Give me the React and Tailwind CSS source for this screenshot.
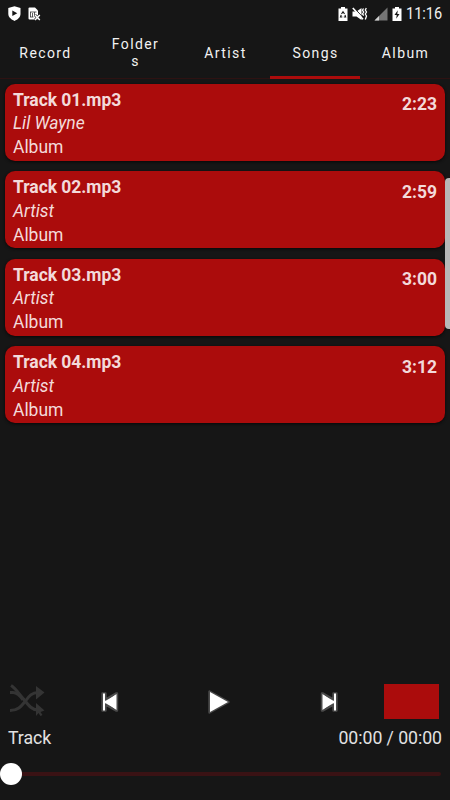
import React from "react";

const tabs = ["Record", "Folders", "Artist", "Songs", "Album"];

const songs = [
  { title: "Track 01.mp3", artist: "Lil Wayne", album: "Album", time: "2:23" },
  { title: "Track 02.mp3", artist: "Artist", album: "Album", time: "2:59" },
  { title: "Track 03.mp3", artist: "Artist", album: "Album", time: "3:00" },
  { title: "Track 04.mp3", artist: "Artist", album: "Album", time: "3:12" },
];

const StatusBar = () => {
  return (
    <div className="flex h-[27px] shrink-0 items-center justify-between pl-2 pr-[8px]">
      <div className="flex items-center gap-[7px]">
        {/* Play protect shield */}
        <svg width="13" height="15" viewBox="0 0 13 15">
          <path d="M6.500 .2 12.500 2v6c0 3-2.700 5.500-6 6.900C3.200 13.500.3 11 .3 8V2Z" fill="#fff" />
          <path d="M4.300 4.500v5.600L9.300 7.300Z" fill="#161616" />
        </svg>
        {/* No sim card */}
        <svg width="13" height="14" viewBox="0 0 13 14">
          <path d="M1.500.5H7L10 3.500V12.500H1.500Q.5 12.500.5 11.500V1.500Q.5.500 1.500.5Z" fill="#fff" />
          <path d="M2 5h6.500M2.500 5v5M4.500 6v4M6.500 5v4M2 10h3.500" stroke="#333" strokeWidth=".8" fill="none" />
          <path d="m7 8 5 5M12 8l-5 5" stroke="#161616" strokeWidth="2.600" />
          <path d="m7 8 4.800 5M11.800 8 7 13" stroke="#fff" strokeWidth="1.500" />
        </svg>
      </div>
      <div className="flex items-center">
        {/* Battery saver */}
        <svg width="10" height="14" viewBox="0 0 10 14" className="mr-[4px]">
          <path d="M3 0h4v1.500h2.500V14H.5V1.500H3Z" fill="#fff" />
          <path d="M3.500 7 5 4.800 6.500 7M7 8l.6 2H5.800M4.300 10H2.500L3.200 8" stroke="#161616" strokeWidth="1.100" fill="none" />
        </svg>
        {/* Muted, vibrate */}
        <svg width="16" height="14" viewBox="0 0 16 14" className="mr-[6px]">
          <path d="M.5 4.500h4L9.500 1v12L4.500 9.500h-4Z" fill="#fff" />
          <path d="M2.500 1.200 11.500 11" stroke="#161616" strokeWidth="1" />
          <path d="M.8 1 11 12.300" stroke="#fff" strokeWidth="1.600" />
          <path d="m11.500 1.500-1 1.800 1.200 1.800-1.200 1.800 1.200 1.800M14.300 1l-1 2 1.200 2-1.200 2 1.200 2-1.200 3.500" stroke="#fff" strokeWidth="1.300" fill="none" />
        </svg>
        {/* Signal */}
        <svg width="14" height="14" viewBox="0 0 14 14" className="mr-[4px]">
          <path d="M.5 13.500 13.500.5v13Z" fill="#757575" />
          <path d="M.5 13.500 5 9v4.500Z" fill="#d0d0d0" />
        </svg>
        {/* Charging battery */}
        <svg width="10" height="14" viewBox="0 0 10 14" className="mr-[4px]">
          <path d="M3 0h4v1.500h2.500V14H.5V1.500H3Z" fill="#fff" />
          <path d="M5.800 3.300 2.500 8h2.200l-.5 3.700L7.500 7H5.300Z" fill="#161616" />
        </svg>
        <span className="w-[36px] origin-left scale-x-[.88] whitespace-nowrap pt-[2px] text-[16.5px] leading-none text-[#f2f2f2]">
          11:16
        </span>
      </div>
    </div>
  );
};

const TabBar = () => {
  return (
    <div className="grid h-[52px] shrink-0 grid-cols-5">
      {tabs.map((tab) => (
        <div
          key={tab}
          className={
            tab === "Songs"
              ? "flex items-center justify-center border-b-[3px] border-[#ab0c0c] pt-[3px] pl-px"
              : "flex items-center justify-center border-b border-[#2e1212] pt-[1.5px] pl-px"
          }
        >
          <span className="w-[54px] break-all text-center text-[14px] leading-[17px] tracking-[1.4px] text-[#f2f2f2]">
            {tab}
          </span>
        </div>
      ))}
    </div>
  );
};

const SongCard = ({ song }) => {
  return (
    <li className="flex h-[77px] justify-between rounded-[10px] bg-[#ab0c0c] px-2 text-[17.5px] tracking-[-0.04px] text-[#f3dada] shadow-[0_1px_3px_#080808]">
      <div className="pt-[5px] leading-[23.6px]">
        <p className="font-bold">{song.title}</p>
        <p className="italic">{song.artist}</p>
        <p>{song.album}</p>
      </div>
      <span className="pt-[9.5px] font-bold leading-[23.6px]">{song.time}</span>
    </li>
  );
};

const Player = () => {
  return (
    <div className="shrink-0">
      <div className="flex h-[44px] items-center">
        {/* Shuffle */}
        <svg width="36" height="34" viewBox="0 0 36 34" className="ml-[9px]">
          <g fill="none" stroke="#343434" strokeWidth="3">
            <path d="M2 1.500c5 3 8 8.500 13 14 4.500 6 8 10.500 14 10.500" />
            <path d="M1 8.500h3c4 0 7 3 10 7.500M1 26.500c8 0 11-4 15.500-9.500C20 12 23 8.500 29 8.500" />
          </g>
          <path d="M27 2 35.500 8.500 27 15.500ZM27 19l8.500 7.500-4 1.500 2 3-2 1-2-3-2.500 3Z" fill="#343434" />
        </svg>
        <svg width="18" height="20" viewBox="0 0 18 20" className="mt-px ml-[56px]">
          <path d="M1.500 1.500h3v6l10.500-6h1v17h-1l-10.500-6v6h-3Z" fill="#fff" stroke="#4a4a4a" strokeWidth="2.400" strokeLinejoin="round" />
          <path d="M2 1.500h2v17H2ZM15.500 2v16L4.500 10Z" fill="#fff" />
        </svg>
        <svg width="22" height="24" viewBox="0 0 22 24" className="mt-px ml-[89px]">
          <path d="M1.500 1.500v21l19-10.500Z" fill="#fff" stroke="#4a4a4a" strokeWidth="2.400" strokeLinejoin="round" />
          <path d="M2 2v20l18-10Z" fill="#fff" />
        </svg>
        <svg width="18" height="20" viewBox="0 0 18 20" className="mt-px ml-[90px]">
          <path d="M16.500 1.500h-3v6L3 1.500H2v17h1l10.500-6v6h3Z" fill="#fff" stroke="#4a4a4a" strokeWidth="2.400" strokeLinejoin="round" />
          <path d="M14 1.500h2v17h-2ZM2.500 2v16l11-8Z" fill="#fff" />
        </svg>
        <div className="ml-[46px] h-[35px] w-[55px] bg-[#ab0c0c]" />
      </div>
      <div className="flex h-[28px] items-center justify-between pl-2 pr-[8px] pt-[2px] text-[17.7px] tracking-[-0.05px] text-[#e2e2e2]">
        <span>Track</span>
        <span>00:00 / 00:00</span>
      </div>
      {/* Seek bar */}
      <div className="flex h-[49px] items-center pb-[4px]">
        <div className="h-[22px] w-[22px] rounded-full bg-white" />
        <div className="h-[4px] w-[419px] rounded-r-full bg-[#3a1214]" />
      </div>
    </div>
  );
};

const App = () => {
  return (
    <div className="flex h-[800px] w-[450px] flex-col overflow-hidden bg-[#161616] font-[Roboto,sans-serif]">
      <StatusBar />
      <TabBar />
      <div className="relative flex-1 px-[5px] pt-[4.9px]">
        <ul className="flex flex-col gap-[10.5px]">
          {songs.map((song) => (
            <SongCard key={song.title} song={song} />
          ))}
        </ul>
        {/* Scroll handle */}
        <div className="absolute right-0 top-[99px] h-[151px] w-[5px] rounded-l-[4px] bg-[#b8b8b8]" />
      </div>
      <Player />
    </div>
  );
};

export default App;
